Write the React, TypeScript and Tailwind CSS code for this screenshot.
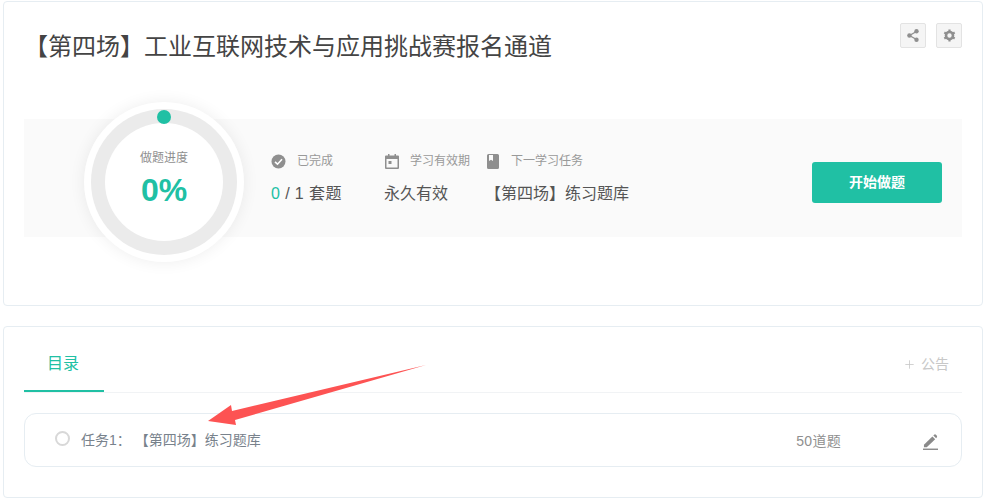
import { Plus } from 'lucide-react';

const font = { fontFamily: '"Liberation Sans", "Noto Sans CJK SC", sans-serif' };

function CheckIcon() {
  return (
    <svg width="15" height="15" viewBox="0 0 15 15">
      <circle cx="7.5" cy="7.5" r="7" fill="#8f8f8f" />
      <path d="M4 7.8 L6.5 10.2 L11 5.2" fill="none" stroke="#fff" strokeWidth="1.6" />
    </svg>
  );
}

function CalendarIcon() {
  return (
    <svg width="14" height="15" viewBox="0 0 14 15">
      <path fillRule="evenodd" d="M3 0h1.500v1.500h5V0H11v1.500h2a1 1 0 0 1 1 1V14a1 1 0 0 1-1 1H1a1 1 0 0 1-1-1V2.500a1 1 0 0 1 1-1h2V0zM1.500 5v8.500h11V5h-11z" fill="#8f8f8f" />
      <rect x="3.500" y="7" width="3" height="3" fill="#8f8f8f" />
    </svg>
  );
}

function BookIcon() {
  return (
    <svg width="12" height="15" viewBox="0 0 12 15">
      <path fillRule="evenodd" d="M1.500 0H10.500A1.500 1.500 0 0 1 12 1.500V13.500A1.500 1.500 0 0 1 10.500 15H1.500A1.500 1.500 0 0 1 0 13.500V1.500A1.500 1.500 0 0 1 1.500 0zM2 1V7L4 5.800 6 7V1H2z" fill="#8f8f8f" />
    </svg>
  );
}

function PenIcon() {
  return (
    <svg width="15" height="16" viewBox="0 0 16 17">
      <path d="M1 11.500 L10 2.500 L13 5.500 L4 14 L1 14 Z" fill="#8a8a8a" />
      <path d="M11 1.500 L12.200 0.500 Q13 0 13.800 0.700 L14.800 1.800 Q15.400 2.600 14.800 3.300 L14 4.500 Z" fill="#8a8a8a" />
      <rect x="0" y="15.500" width="16" height="1.500" fill="#8a8a8a" />
    </svg>
  );
}

function ShareIcon() {
  return (
    <svg width="12" height="13" viewBox="0 0 12 13">
      <path d="M9.500 2.500 L2.500 6.500 L9.500 10.500" fill="none" stroke="#8f8f8f" strokeWidth="1.300" />
      <circle cx="9.500" cy="2.300" r="2.200" fill="#8f8f8f" />
      <circle cx="2.400" cy="6.500" r="2.200" fill="#8f8f8f" />
      <circle cx="9.500" cy="10.700" r="2.200" fill="#8f8f8f" />
    </svg>
  );
}

function GearIcon() {
  return (
    <svg width="13" height="13" viewBox="0 0 13 13">
      <circle cx="6.500" cy="6.500" r="3.500" fill="none" stroke="#8f8f8f" strokeWidth="2.600" />
      <path d="M6.500 0.500 V12.500 M1.300 3.500 L11.700 9.500 M1.300 9.500 L11.700 3.500" stroke="#8f8f8f" strokeWidth="2.200" strokeDasharray="2.200 7.600" />
    </svg>
  );
}

function ProgressRing() {
  return (
    <div className="relative flex h-[160px] w-[160px] shrink-0 items-center justify-center rounded-full bg-white shadow-[0_0_16px_rgba(0,0,0,0.07)] ml-[60px] mt-[-17px] mb-[-25px]">
      <div className="flex h-[146px] w-[146px] items-center justify-center rounded-full bg-[#ebebeb]">
        <div className="flex h-[118px] w-[118px] flex-col items-center rounded-full bg-white pt-[26px]">
          <div className="text-[12px] leading-[18px] text-[#8f8f8f]">做题进度</div>
          <div className="mt-[5px] text-[32px] font-bold leading-[36px] text-[#20c0a4]">0%</div>
        </div>
      </div>
      <div className="absolute left-[73px] top-[8px] h-[14px] w-[14px] rounded-full bg-[#20c0a4]" />
    </div>
  );
}

export default function App() {
  return (
    <div className="h-[502px] w-[995px] overflow-hidden bg-white pl-[3px] pt-px" style={font}>
      <div className="relative h-[305px] w-[980px] rounded-[4px] border border-[#e6edf2] pl-[20px] pr-[20px] pt-[27px]">
        <div className="absolute right-[20px] top-[21px] flex gap-[10px]">
          <div className="flex h-[25px] w-[26px] items-center justify-center rounded-[2px] border border-[#e3e3e3] bg-[#f5f5f5]">
            <ShareIcon />
          </div>
          <div className="flex h-[25px] w-[26px] items-center justify-center rounded-[2px] border border-[#e3e3e3] bg-[#f5f5f5]">
            <GearIcon />
          </div>
        </div>
        <h1 className="text-[24px] font-normal leading-[36px] text-[#444]">【第四场】工业互联网技术与应用挑战赛报名通道</h1>
        <div className="mt-[54px] flex h-[118px] w-[938px] bg-[#fafafa]">
          <ProgressRing />
          <div className="ml-[27px] flex w-[113px] flex-col pt-[34px]">
            <div className="flex h-[16px] items-center text-[12px] text-[#999]">
              <CheckIcon />
              <span className="ml-[11px]">已完成</span>
            </div>
            <div className="mt-[13px] whitespace-pre text-[16px] leading-[24px] tracking-[0.4px] text-[#555]">
              <span className="text-[#20c0a4]">0</span> / 1 套题
            </div>
          </div>
          <div className="flex w-[103px] flex-col pt-[34px]">
            <div className="flex h-[16px] items-center pl-px text-[12px] text-[#999]">
              <CalendarIcon />
              <span className="ml-[11px]">学习有效期</span>
            </div>
            <div className="mt-[13px] text-[16px] leading-[24px] text-[#555]">永久有效</div>
          </div>
          <div className="flex flex-col pt-[34px]">
            <div className="flex h-[16px] items-center text-[12px] text-[#999]">
              <BookIcon />
              <span className="ml-[12px]">下一学习任务</span>
            </div>
            <div className="ml-[-2px] mt-[13px] text-[16px] leading-[24px] text-[#555]">【第四场】练习题库</div>
          </div>
          <div className="ml-auto mr-[20px] mt-[43px] flex h-[41px] w-[130px] items-center justify-center rounded-[3px] bg-[#20c0a4] text-[14px] font-bold text-white">
            开始做题
          </div>
        </div>
      </div>

      <div className="mt-[20px] h-[172px] w-[980px] rounded-[4px] border border-[#e6edf2] px-[20px]">
        <div className="flex h-[66px] items-start justify-between border-b border-[#f1f3f5]">
          <div className="h-[65px] w-[80px] border-b-2 border-[#20c0a4] pl-[23px] pt-[26px] text-[16px] leading-[22px] text-[#20c0a4]">目录</div>
          <div className="mr-[13px] mt-[26px] flex items-center text-[14px] leading-[22px] text-[#c8c8c8]">
            <Plus size={13} strokeWidth={1.500} />
            <span className="ml-[5px]">公告</span>
          </div>
        </div>
        <div className="mt-[20px] flex h-[54px] items-center rounded-[12px] border border-[#e6edf2] pl-[30px] pr-[23px]">
          <div className="mt-[-3px] h-[15px] w-[15px] rounded-full border-2 border-[#d8d8d8]" />
          <div className="ml-[11px] text-[14px] text-[#78828c]">任务1：</div>
          <div className="ml-[4px] text-[14px] text-[#78828c]">【第四场】练习题库</div>
          <div className="ml-auto mt-[3px] text-[14px] tracking-[0.3px] text-[#8f8f8f]">50道题</div>
          <div className="ml-[82px] mt-[3px]">
            <PenIcon />
          </div>
        </div>
      </div>

      {/* annotation arrow drawn on top of the screenshot */}
      <svg className="pointer-events-none absolute left-0 top-0" width="995" height="502">
        <path d="M208 421 L231 405 L232 411 L426 365 L235 420 L236 425 Z" fill="#fd5353" />
      </svg>
    </div>
  );
}
